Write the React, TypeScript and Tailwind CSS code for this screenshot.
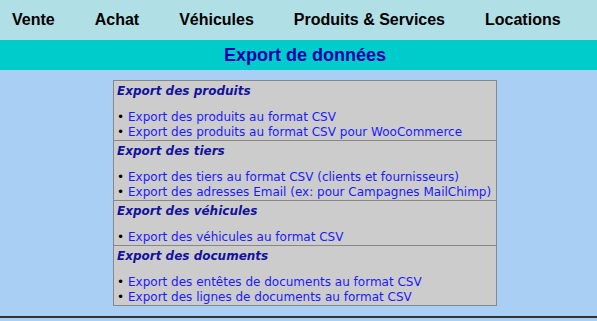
const menu = ["Vente", "Achat", "Véhicules", "Produits & Services", "Locations"];

const sections = [
  {
    title: "Export des produits",
    links: [
      "Export des produits au format CSV",
      "Export des produits au format CSV pour WooCommerce",
    ],
  },
  {
    title: "Export des tiers",
    links: [
      "Export des tiers au format CSV (clients et fournisseurs)",
      "Export des adresses Email (ex: pour Campagnes MailChimp)",
    ],
  },
  {
    title: "Export des véhicules",
    links: ["Export des véhicules au format CSV"],
  },
  {
    title: "Export des documents",
    links: [
      "Export des entêtes de documents au format CSV",
      "Export des lignes de documents au format CSV",
    ],
  },
];

export default function App() {
  return (
    <div className="w-[597px] h-[321px] overflow-hidden bg-[#a9cff4] flex flex-col">
      <nav className="h-10 bg-[#b0dfe5] flex items-center gap-10 pl-3 font-['Liberation_Sans',Arial,sans-serif] text-base font-bold text-black">
        {menu.map((m) => (
          <span key={m}>{m}</span>
        ))}
      </nav>

      <div className="h-[30px] bg-[#00cccc] flex items-center justify-center pl-[13px] font-['Liberation_Sans',Arial,sans-serif] text-[18px] font-bold text-[#0000a8]">
        Export de données
      </div>

      <div className="ml-[113px] mt-[10px] w-[384px] border border-[#888] bg-[#cccccc] font-['DejaVu_Sans',Verdana,sans-serif] text-[12px] leading-[15px]">
        {sections.map((s, i) => (
          <div
            key={s.title}
            className={i > 0 ? "border-t border-[#888] pl-[3px] pt-[3px]" : "pl-[3px] pt-[3px]"}
          >
            <div className="font-bold italic text-[#12129e] h-[15px]">{s.title}</div>
            <ul className="mt-[11px]">
              {s.links.map((l) => (
                <li key={l} className="flex items-center">
                  <span className="w-[11px] text-black text-[12px] leading-[15px]">•</span>
                  <a href="#" className="text-[#1a1aff]">{l}</a>
                </li>
              ))}
            </ul>
          </div>
        ))}
      </div>

      <div className="mt-[10px] h-[2px] bg-[#333]" />
    </div>
  );
}
